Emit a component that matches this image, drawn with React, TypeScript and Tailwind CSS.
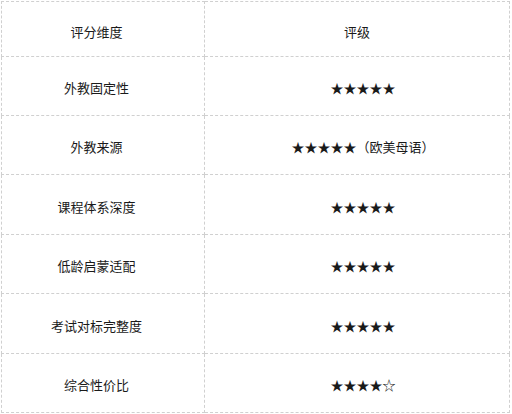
const rows: [string, string][] = [
  ["外教固定性", "★★★★★"],
  ["外教来源", "★★★★★（欧美母语）"],
  ["课程体系深度", "★★★★★"],
  ["低龄启蒙适配", "★★★★★"],
  ["考试对标完整度", "★★★★★"],
  ["综合性价比", "★★★★☆"],
];

export default function App() {
  return (
    <div className="bg-white w-[512px] h-[414px] pt-px pl-px" style={{ fontFamily: '"Noto Sans CJK SC", "Noto Sans", sans-serif' }}>
      <table className="table-fixed border-collapse w-[509px] text-[13px] text-[#1a1a1a] leading-none">
        <colgroup>
          <col className="w-[203px]" />
          <col />
        </colgroup>
        <thead>
          <tr className="h-[55px]">
            <th className="font-normal border border-dashed border-[#d0d0d0] pt-[5px] pr-[13px]">评分维度</th>
            <th className="font-normal border border-dashed border-[#d0d0d0] pt-[5px]">评级</th>
          </tr>
        </thead>
        <tbody>
          {rows.map(([k, v], i) => (
            <tr key={k} className={i === 2 || i === 4 ? "h-[60px]" : "h-[59px]"}>
              <td className="text-center border border-dashed border-[#d0d0d0] pt-[3px] pr-[13px]">{k}</td>
              <td className="text-center border border-dashed border-[#d0d0d0] pt-[3px] pl-[12px]">{v}</td>
            </tr>
          ))}
        </tbody>
      </table>
    </div>
  );
}
